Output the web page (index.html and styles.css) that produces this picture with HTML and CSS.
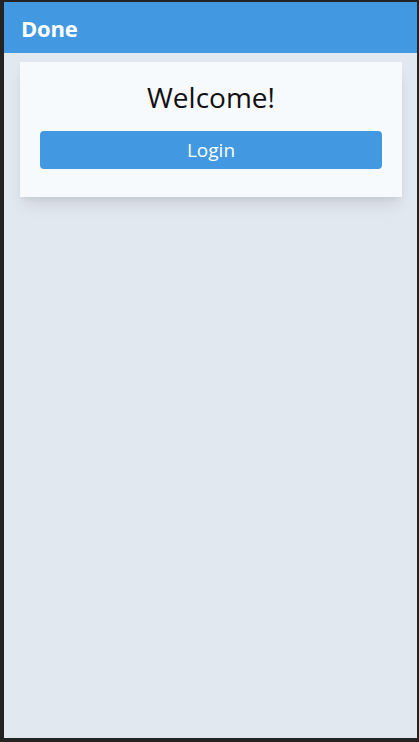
FILE: index.html
```html
<!DOCTYPE html>
<html>
<head>
<meta charset="utf-8">
<link rel="stylesheet" href="styles.css">
</head>
<body>
<div class="frame">
  <header class="topbar"><span class="brand">Done</span></header>
  <main class="content">
    <section class="card">
      <h1 class="title">Welcome!</h1>
      <button class="btn">Login</button>
    </section>
  </main>
</div>
</body>
</html>
```
FILE: styles.css
```css
html, body {
  margin: 0;
  padding: 0;
  background: #232323;
  height: 742px;
  overflow: hidden;
}
body {
  font-family: "Open Sans", "Noto Sans", sans-serif;
}
.frame {
  margin: 2px 2px 0 4px;
  height: 736px;
  background: #e2e8f0;
  display: flex;
  flex-direction: column;
}
.topbar {
  height: 51px;
  background: #4299e1;
  display: flex;
  align-items: center;
  padding-left: 17px;
}
.brand {
  color: #ffffff;
  font-weight: 700;
  font-size: 22px;
  letter-spacing: -0.2px;
}
.content {
  padding: 9px 15px 0 16px;
}
.card {
  background: #f7fafc;
  padding: 16px 20px 28px;
  box-shadow: 0 10px 15px -3px rgba(0,0,0,0.1), 0 4px 6px -2px rgba(0,0,0,0.05);
  display: flex;
  flex-direction: column;
}
.title {
  margin: 0 0 15px;
  font-size: 28px;
  font-weight: 400;
  text-align: center;
  color: #111111;
  line-height: 38px;
}
.btn {
  height: 38px;
  border: none;
  border-radius: 4px;
  background: #4299e1;
  color: #ffffff;
  font-family: inherit;
  font-size: 19px;
  padding: 0;
}
```
